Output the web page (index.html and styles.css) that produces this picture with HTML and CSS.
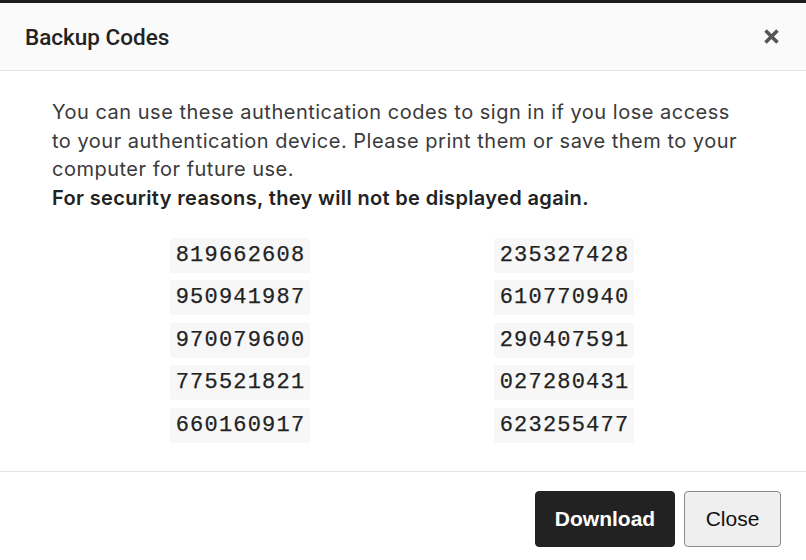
FILE: index.html
```html
<!DOCTYPE html>
<html>
<head>
<meta charset="utf-8">
<link rel="stylesheet" href="styles.css">
</head>
<body>
<div class="modal">
  <div class="modal-header">
    <h2 class="modal-title">Backup Codes</h2>
    <button class="close-x" aria-label="Close">
      <svg width="17" height="17" viewBox="0 0 17 17"><path d="M2.5 2.5 L14.5 14.5 M14.5 2.5 L2.5 14.5" stroke="#555" stroke-width="3.6" stroke-linecap="butt"/></svg>
    </button>
  </div>
  <div class="modal-body">
    <p class="intro">You can use these authentication codes to sign in if you lose access to your authentication device. Please print them or save them to your computer for future use.<br><strong>For security reasons, they will not be displayed again.</strong></p>
    <div class="codes">
      <div class="col">
        <code class="code">819662608</code>
        <code class="code">950941987</code>
        <code class="code">970079600</code>
        <code class="code">775521821</code>
        <code class="code">660160917</code>
      </div>
      <div class="col">
        <code class="code">235327428</code>
        <code class="code">610770940</code>
        <code class="code">290407591</code>
        <code class="code">027280431</code>
        <code class="code">623255477</code>
      </div>
    </div>
  </div>
  <div class="modal-footer">
    <button class="btn btn-dark">Download</button>
    <button class="btn btn-light">Close</button>
  </div>
</div>
</body>
</html>
```

FILE: styles.css
```css
* { box-sizing: border-box; }
html, body { margin: 0; padding: 0; background: #fff; }
body { font-family: Inter, "Noto Sans", sans-serif; color: #333; }
.modal { width: 806px; height: 560px; border-top: 3px solid #1e1e1e; display: flex; flex-direction: column; }
.modal-header {
  height: 68px; background: #fafafa; border-bottom: 1px solid #e3e3e3;
  display: flex; align-items: center; justify-content: space-between;
  padding: 0 26px 0 25px;
}
.modal-title { margin: 0; font-family: Roboto, "Noto Sans", sans-serif; font-size: 22.5px; font-weight: 500; color: #222; }
.close-x { background: none; border: 0; padding: 0; width: 17px; height: 17px; display: flex; cursor: pointer; }
.modal-body { padding: 27px 56px 0 52px; height: 400px; }
.intro { margin: 0; font-size: 20px; letter-spacing: 0.5px; line-height: 28.7px; color: #3a3a3a; }
.intro strong { font-weight: 600; color: #222; letter-spacing: 0.35px; }
.codes { display: grid; grid-template-columns: 324px 324px; margin: 25px 0 0 26px; }
.col { display: flex; flex-direction: column; align-items: center; gap: 7.5px; }
.code {
  display: block; background: #f7f7f7; border-radius: 3px;
  font-family: "Liberation Mono", monospace; font-size: 22px; letter-spacing: 1.2px;
  line-height: 35px; height: 35px; padding: 0 5px 0 6px; color: #222; font-weight: 400;
  -webkit-text-stroke: 0.25px #222;
}
.modal-footer {
  border-top: 1px solid #e3e3e3; flex: 1;
  display: flex; justify-content: flex-end; align-items: flex-start; gap: 9px;
  padding: 19px 25px 0 0;
}
.btn {
  height: 56px; border-radius: 4px; font-family: "Liberation Sans", Arial, sans-serif;
  font-size: 21px; cursor: pointer;
}
.btn-dark { width: 140px; background: #222; color: #fff; border: 1px solid #222; font-weight: 700; }
.btn-light { width: 97px; background: #efefef; color: #111; border: 1px solid #8a8a8a; }
```
